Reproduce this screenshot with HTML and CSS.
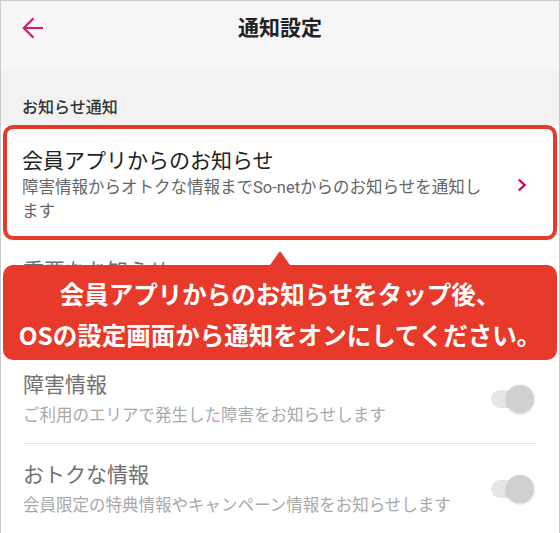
FILE: index.html
```html
<!DOCTYPE html>
<html lang="ja">

<head>
    <meta charset="UTF-8">
    <meta name="viewport" content="width=device-width, initial-scale=1.0">
    <title>通知設定</title>
    <link rel="stylesheet" href="styles.css">
</head>

<body>

    <div class="screen">
        <!-- App Bar -->
        <header class="appbar">
            <button class="back-btn" type="button" aria-label="戻る">
                <svg width="24" height="24" viewBox="0 0 24 24">
                    <path d="M22 12H3M12.5 2.3L2.8 12l9.7 9.7" fill="none" stroke="#d6176b" stroke-width="2.2" />
                </svg>
            </button>
            <h1>通知設定</h1>
            <span class="appbar-spacer"></span>
        </header>

        <!-- Section: お知らせ通知 -->
        <h2 class="section-title">お知らせ通知</h2>

        <a class="setting-link" href="#">
            <div class="setting-text">
                <p class="setting-name">会員アプリからのお知らせ</p>
                <p class="setting-desc">障害情報からオトクな情報までSo-netからのお知らせを通知します</p>
            </div>
            <svg class="chevron" width="10" height="14" viewBox="0 0 10 14">
                <path d="M1.8 1.5L7.6 7l-5.8 5.5" fill="none" stroke="#c9085e" stroke-width="2.4" />
            </svg>
        </a>

        <!-- Toggle Items -->
        <ul class="toggle-list">
            <li class="toggle-row">
                <div class="setting-text">
                    <p class="row-name">重要なお知らせ</p>
                    <p class="row-desc">メンテナンスや障害など、ご利用に関わる重要なお知らせを通知します</p>
                </div>
                <span class="switch"><span class="switch-track"></span><span class="switch-thumb"></span></span>
            </li>
            <li class="toggle-row">
                <div class="setting-text">
                    <p class="row-name">障害情報</p>
                    <p class="row-desc">ご利用のエリアで発生した障害をお知らせします</p>
                </div>
                <span class="switch"><span class="switch-track"></span><span class="switch-thumb"></span></span>
            </li>
            <li class="toggle-row">
                <div class="setting-text">
                    <p class="row-name">おトクな情報</p>
                    <p class="row-desc">会員限定の特典情報やキャンペーン情報をお知らせします</p>
                </div>
                <span class="switch"><span class="switch-track"></span><span class="switch-thumb"></span></span>
            </li>
        </ul>

        <!-- Callout -->
        <div class="callout">
            <p>会員アプリからのお知らせをタップ後、<br>OSの設定画面から通知をオンにしてください。</p>
        </div>
    </div>

</body>

</html>
```

FILE: styles.css
```css
/* Basic Reset */
* {
    margin: 0;
    padding: 0;
    box-sizing: border-box;
}

body {
    font-family: Roboto, "Noto Sans CJK JP", sans-serif;
    background: #fff;
    color: #222;
}

/* Screen frame */
.screen {
    position: relative;
    width: 560px;
    height: 533px;
    border: 1px solid #cbcbcb;
    border-bottom: none;
    overflow: hidden;
    background: #fff;
}

/* App Bar */
.appbar {
    display: grid;
    grid-template-columns: 66px 1fr 66px;
    align-items: center;
    height: 69px;
    padding-bottom: 16px;
    background: #f6f6f6;
}

.back-btn {
    display: flex;
    width: 24px;
    height: 24px;
    margin-left: 20px;
    border: none;
    background: none;
    cursor: pointer;
}

.appbar h1 {
    text-align: center;
    font-size: 21px;
    font-weight: 700;
    line-height: 30px;
    color: #222;
}

/* Section Title */
.section-title {
    height: 55px;
    padding: 26px 0 0 21px;
    font-size: 16px;
    font-weight: 500;
    line-height: 24px;
    color: #333;
    background: #f2f2f2;
}

/* Highlighted link row */
.setting-link {
    display: flex;
    align-items: center;
    margin: 0 2px;
    padding: 17px 0 12px 15px;
    border: 4px solid #e83a2b;
    border-radius: 10px;
    text-decoration: none;
    background: #fff;
}

.setting-text {
    flex: 1;
    min-width: 0;
}

.setting-name {
    font-size: 21px;
    line-height: 30px;
    color: #222;
}

.setting-desc {
    font-size: 16.5px;
    line-height: 24px;
    color: #666;
}

.chevron {
    flex-shrink: 0;
    margin: 0 26px 0 27px;
}

/* Toggle list */
.toggle-list {
    list-style: none;
}

.toggle-row {
    display: flex;
    align-items: center;
    margin: 0 22px;
    padding: 16px 0 15px;
    border-bottom: 1px solid #e3e3e3;
}

.row-name {
    font-size: 21px;
    line-height: 30px;
    color: #707070;
}

.row-desc {
    margin-top: 4px;
    padding-right: 20px;
    font-size: 16.5px;
    line-height: 24px;
    color: #a9a9a9;
}

/* Disabled switch (on) */
.switch {
    position: relative;
    flex-shrink: 0;
    width: 43px;
    height: 28px;
    margin-right: 3px;
}

.switch-track {
    position: absolute;
    left: 0;
    top: 5px;
    width: 36px;
    height: 18px;
    border-radius: 9px;
    background: #e6e6e6;
}

.switch-thumb {
    position: absolute;
    right: 0;
    top: 0;
    width: 28px;
    height: 28px;
    border-radius: 50%;
    background: #d0d0d0;
    box-shadow: 0 1px 3px rgba(0, 0, 0, 0.18);
}

/* Callout bubble */
.callout {
    position: absolute;
    top: 264px;
    left: 2px;
    right: 2px;
    padding: 8px 0 5px;
    border-radius: 10px;
    background: #e83a2b;
    text-align: center;
}

.callout::before {
    content: "";
    position: absolute;
    top: -14px;
    left: 50%;
    transform: translateX(-50%);
    border-left: 10px solid transparent;
    border-right: 10px solid transparent;
    border-bottom: 14px solid #e83a2b;
}

.callout p {
    font-family: "Noto Sans CJK JP", sans-serif;
    font-size: 24.5px;
    font-weight: 700;
    line-height: 41px;
    color: #fff;
}
```
